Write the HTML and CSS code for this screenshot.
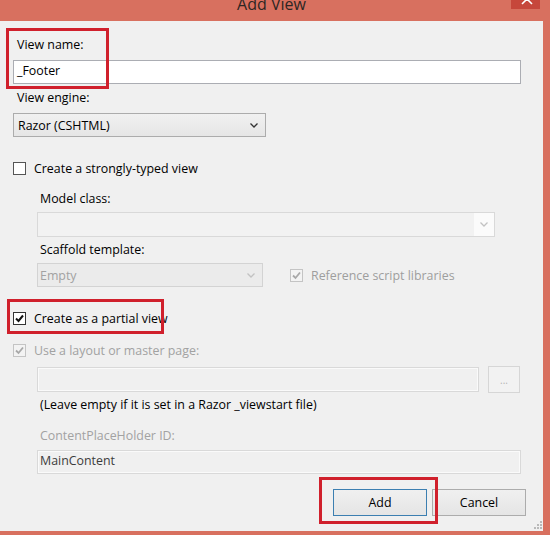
FILE: index.html
```html
<!DOCTYPE html>
<html>
<head>
<meta charset="utf-8">
<title>Add View</title>
<link rel="stylesheet" href="styles.css">
</head>
<body>
<div class="window">
  <div class="titlebar">
    <div class="spacer"></div>
    <div class="title">Add View</div>
    <div class="tb-right">
      <div class="close">
        <svg width="29" height="9" viewBox="0 0 29 9"><path d="M11 -6 L21 4 M21 -6 L11 4" stroke="#fff" stroke-width="1.6" fill="none"/></svg>
      </div>
    </div>
  </div>
  <div class="content">
    <div class="label l-name">View name:</div>
    <div class="textbox tb-name">_Footer</div>
    <div class="label l-engine">View engine:</div>
    <div class="select sel-engine">
      <span>Razor (CSHTML)</span>
      <svg class="chev" width="8" height="5" viewBox="0 0 8 5"><polyline points="0.5,0.5 4,4 7.5,0.5" fill="none" stroke="#333" stroke-width="1.3"/></svg>
    </div>
    <div class="check-row cr-typed">
      <span class="cb"></span>
      <span>Create a strongly-typed view</span>
    </div>
    <div class="indent">
      <div class="label l-model">Model class:</div>
      <div class="combo">
        <span class="combo-field"></span>
        <span class="combo-btn">
          <svg width="8" height="5" viewBox="0 0 8 5"><polyline points="0.5,0.5 4,4 7.5,0.5" fill="none" stroke="#c2c2c2" stroke-width="1.3"/></svg>
        </span>
      </div>
      <div class="label l-scaffold">Scaffold template:</div>
      <div class="scaffold-row">
        <div class="select sel-scaffold">
          <span>Empty</span>
          <svg class="chev" width="8" height="5" viewBox="0 0 8 5"><polyline points="0.5,0.5 4,4 7.5,0.5" fill="none" stroke="#c2c2c2" stroke-width="1.3"/></svg>
        </div>
        <div class="check-row dis cr-ref">
          <span class="cb cb-dis">
            <svg width="11" height="11" viewBox="0 0 11 11"><path d="M2 5.5 L4.5 8 L9 2.5" fill="none" stroke="#a8a8a8" stroke-width="1.8"/></svg>
          </span>
          <span>Reference script libraries</span>
        </div>
      </div>
    </div>
    <div class="check-row cr-partial">
      <span class="cb cb-on">
        <svg width="11" height="11" viewBox="0 0 11 11"><path d="M2 5.5 L4.5 8 L9 2.5" fill="none" stroke="#111" stroke-width="2"/></svg>
      </span>
      <span>Create as a partial view</span>
    </div>
    <div class="check-row dis cr-layout">
      <span class="cb cb-dis">
        <svg width="11" height="11" viewBox="0 0 11 11"><path d="M2 5.5 L4.5 8 L9 2.5" fill="none" stroke="#a8a8a8" stroke-width="1.8"/></svg>
      </span>
      <span>Use a layout or master page:</span>
    </div>
    <div class="indent">
      <div class="layout-row">
        <div class="textbox tb-dis tb-layout"></div>
        <div class="browse">...</div>
      </div>
      <div class="label l-note">(Leave empty if it is set in a Razor _viewstart file)</div>
      <div class="label l-cph">ContentPlaceHolder ID:</div>
      <div class="textbox tb-dis tb-cph">MainContent</div>
    </div>
    <div class="buttons">
      <div class="btn btn-default">Add</div>
      <div class="btn">Cancel</div>
    </div>
  </div>
  <div class="annot a1"></div>
  <div class="annot a2"></div>
  <div class="annot a3"></div>
  <svg class="grip" width="9" height="9" viewBox="0 0 9 9">
    <rect x="7" y="1" width="2" height="2" fill="#b9b9b9"/>
    <rect x="4" y="4" width="2" height="2" fill="#b9b9b9"/>
    <rect x="7" y="4" width="2" height="2" fill="#b9b9b9"/>
    <rect x="1" y="7" width="2" height="2" fill="#b9b9b9"/>
    <rect x="4" y="7" width="2" height="2" fill="#b9b9b9"/>
    <rect x="7" y="7" width="2" height="2" fill="#b9b9b9"/>
  </svg>
</div>
</body>
</html>
```
FILE: styles.css
```css
* { box-sizing: border-box; }
html, body { margin: 0; padding: 0; }
body {
  width: 550px;
  height: 535px;
  overflow: hidden;
  font-family: "Open Sans", "Noto Sans", sans-serif;
  font-size: 12.4px;
  color: #000;
}
.window {
  position: relative;
  width: 550px;
  height: 535px;
  background: #d8705f;
  display: flex;
  flex-direction: column;
}
.titlebar {
  height: 21px;
  flex: none;
  overflow: hidden;
  display: grid;
  grid-template-columns: 1fr auto 1fr;
  padding-right: 7px;
}
.title {
  font-size: 16px;
  line-height: 16px;
  margin-top: -4px;
  color: #2e2623;
  white-space: nowrap;
}
.tb-right {
  display: flex;
  justify-content: flex-end;
  padding-right: 3px;
}
.close {
  width: 29px;
  height: 9px;
  background: #c6473b;
}
.close svg { display: block; }
.content {
  flex: 1;
  margin: 0 7px 4px 0;
  background: #f0f0f0;
  padding: 16px 17px 0 13px;
}
.label {
  height: 16px;
  line-height: 16px;
  padding-left: 4px;
  white-space: nowrap;
}
.textbox {
  height: 24px;
  border: 1px solid #abadb3;
  background: #fff;
  padding-left: 3px;
  line-height: 20px;
  white-space: nowrap;
}
.tb-name { margin-top: 7px; width: 508px; }
.l-engine { margin-top: 6px; }
.select {
  height: 24px;
  display: flex;
  align-items: center;
  justify-content: space-between;
  border: 1px solid #acacac;
  padding: 0 7px 0 4px;
}
.sel-engine {
  margin-top: 7px;
  width: 253px;
  background: linear-gradient(#f1f1f1, #e6e6e6);
}
.chev { display: block; }
.check-row {
  height: 16px;
  display: flex;
  align-items: center;
  gap: 8px;
  white-space: nowrap;
}
.cb {
  width: 13px;
  height: 13px;
  flex: none;
  border: 1px solid #555;
  background: #fff;
  display: flex;
  align-items: center;
  justify-content: center;
}
.cb svg { display: block; }
.cb-on { border-color: #333; }
.cb-dis { border-color: #c4c4c4; background: #f3f3f3; }
.dis { color: #a2a2a2; }
.cr-typed { margin-top: 23px; }
.indent { margin-left: 24px; }
.indent .label { padding-left: 3px; }
.l-model { margin-top: 15px; }
.combo {
  margin-top: 5px;
  width: 458px;
  height: 25px;
  display: flex;
  border: 1px solid #d9d9d9;
  background: #f2f2f2;
}
.combo-field { flex: 1; }
.combo-btn {
  width: 20px;
  background: #fbfbfb;
  display: flex;
  align-items: center;
  justify-content: center;
}
.l-scaffold { margin-top: 5px; }
.scaffold-row {
  margin-top: 5px;
  height: 24px;
  display: flex;
  align-items: center;
  gap: 27px;
}
.sel-scaffold {
  width: 226px;
  background: #ebebeb;
  border-color: #d3d3d3;
  color: #a2a2a2;
  padding-left: 2px;
}
.cr-ref { color: #9e9e9e; }
.cr-partial { margin-top: 23px; }
.cr-layout { margin-top: 16px; }
.layout-row {
  margin-top: 8px;
  height: 27px;
  display: flex;
  align-items: center;
  gap: 9px;
}
.tb-dis {
  border-color: #d9d9d9;
  background: #f0f0f0;
  box-shadow: inset 0 0 0 1px #fafafa;
}
.tb-layout { width: 442px; height: 25px; }
.browse {
  width: 32px;
  height: 27px;
  border: 1px solid #d6d6d6;
  background: #f2f2f2;
  color: #b4b4b4;
  font-size: 10px;
  text-align: center;
  line-height: 27px;
}
.l-note { margin-top: 4px; }
.l-cph { margin-top: 15px; color: #a2a2a2; }
.tb-cph {
  margin-top: 6px;
  width: 484px;
  color: #3c3c3c;
  padding-left: 2px;
}
.buttons {
  margin-top: 15px;
  height: 27px;
  display: flex;
  justify-content: flex-end;
  gap: 5px;
}
.btn {
  width: 94px;
  height: 27px;
  border: 1px solid #acacac;
  background: linear-gradient(#f0f0f0, #e5e5e5);
  text-align: center;
  line-height: 25px;
}
.btn-default { border-color: #3c7fb1; }
.annot {
  position: absolute;
  border: 3px solid #d0202c;
}
.a1 { left: 6px; top: 28px; width: 103px; height: 61px; }
.a2 { left: 7px; top: 299px; width: 157px; height: 35px; }
.a3 { left: 319px; top: 477px; width: 119px; height: 47px; }
.grip {
  position: absolute;
  left: 533px;
  top: 520px;
}
```
